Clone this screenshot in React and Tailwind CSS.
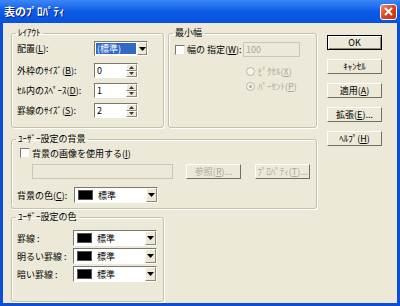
const FONT = "font-['Noto_Sans_CJK_JP','Noto_Sans_CJK_SC',sans-serif]";

function Arrow({ color = "black" }) {
  return (
    <svg width="7" height="4" viewBox="0 0 7 4">
      <path d="M0 0h7L3.5 4z" fill={color} />
    </svg>
  );
}

function SmallArrow({ up }) {
  return (
    <svg width="5" height="3" viewBox="0 0 5 3">
      <path d={up ? "M0 3h5L2.5 0z" : "M0 0h5L2.5 3z"} fill="#3a3a3a" />
    </svg>
  );
}

function Group({ title, className, children }) {
  return (
    <fieldset
      className={`rounded-[3px] border border-[#C4C1AF] shadow-[1px_1px_0_white,inset_1px_1px_0_white] ${className}`}
    >
      <legend className="ml-[4px] h-[12px] px-[2px] text-[9px] leading-[12px] text-black">
        {title}
      </legend>
      {children}
    </fieldset>
  );
}

function Button({ children, def, disabled }) {
  return (
    <div
      className={`flex h-[15px] w-[55px] items-center justify-center text-[9px] leading-none ${
        def
          ? "border border-black shadow-[inset_1px_1px_0_white,inset_-1px_-1px_0_#8A887C]"
          : "border border-t-white border-l-white border-r-[#716F64] border-b-[#716F64]"
      } ${disabled ? "text-[#ACA899]" : "text-black"}`}
    >
      {children}
    </div>
  );
}

function Spin({ value }) {
  return (
    <div className="flex h-[15px] w-[44px] border border-t-[#7A786B] border-l-[#7A786B] border-r-white border-b-white bg-white">
      <span className="flex-1 pl-[2px] text-[9px] leading-[13px]">{value}</span>
      <div className="flex w-[11px] flex-col">
        <div className="flex flex-1 items-center justify-center border border-t-white border-l-white border-r-[#8A887C] border-b-[#8A887C] bg-[#ECE9D8]">
          <SmallArrow up />
        </div>
        <div className="flex flex-1 items-center justify-center border border-t-white border-l-white border-r-[#8A887C] border-b-[#8A887C] bg-[#ECE9D8]">
          <SmallArrow />
        </div>
      </div>
    </div>
  );
}

function ColorCombo() {
  return (
    <div className="flex h-[16px] w-[84px] items-center border border-t-[#7A786B] border-l-[#7A786B] border-r-white border-b-white bg-white">
      <div className="ml-[3px] h-[10px] w-[15px] border border-[#555] bg-black" />
      <span className="ml-[5px] flex-1 text-[9px] leading-none">標準</span>
      <div className="flex h-[14px] w-[11px] items-center justify-center border border-t-white border-l-white border-r-[#8A887C] border-b-[#8A887C] bg-[#ECE9D8]">
        <Arrow />
      </div>
    </div>
  );
}

function Check({ children }) {
  return (
    <div className="flex items-center">
      <div className="h-[10px] w-[10px] border border-t-[#7A786B] border-l-[#7A786B] border-r-[#E8E6DA] border-b-[#E8E6DA] bg-white" />
      <span className="ml-[2px] text-[9px] leading-none">{children}</span>
    </div>
  );
}

function Radio({ children, checked }) {
  return (
    <div className="flex items-center text-[#ACA899]">
      <div className="flex h-[9px] w-[9px] items-center justify-center rounded-full border border-[#B8B6A8] bg-[#F4F3EC]">
        {checked && <div className="h-[3px] w-[3px] rounded-full bg-[#ACA899]" />}
      </div>
      <span className="ml-[3px] text-[9px] leading-none">{children}</span>
    </div>
  );
}

export default function App() {
  return (
    <div className={`flex h-[306px] w-[400px] flex-col bg-[#0A4FD6] ${FONT}`}>
      <div className="flex h-[23px] items-center bg-linear-to-b from-[#3C86F7] via-[#0B5BE6] to-[#0952DC] pl-[4px] pr-[3px]">
        <span className="flex-1 text-[11px] font-bold text-white [text-shadow:1px_1px_0_#0A1E6A]">
          表のﾌﾟﾛﾊﾟﾃｨ
        </span>
        <div className="flex h-[16px] w-[17px] items-center justify-center rounded-[3px] border border-white bg-linear-to-br from-[#E88A6A] via-[#D9441C] to-[#C2370F]">
          <svg width="9" height="9" viewBox="0 0 9 9">
            <path d="M1 1l7 7M8 1l-7 7" stroke="white" strokeWidth="2" />
          </svg>
        </div>
      </div>

      <div className="mx-[3px] mb-[3px] flex flex-1 bg-[#ECE9D8] pl-[8px] pt-[4px] text-black">
        <div className="flex w-[306px] flex-col">
          <div className="flex gap-[4px]">
            <Group title="ﾚｲｱｳﾄ" className="h-[101px] w-[153px]">
              <div className="flex flex-col gap-[5px] pl-[5px] pt-[2px]">
                <div className="flex h-[15px] items-center">
                  <span className="w-[77px] text-[9px] leading-none">
                    配置(<u>L</u>):
                  </span>
                  <div className="flex h-[15px] w-[54px] items-center border border-t-[#7A786B] border-l-[#7A786B] border-r-white border-b-white bg-white">
                    <span className="ml-[1px] flex-1 bg-[#316AC5] pl-[1px] text-[9px] leading-[11px] text-white">
                      (標準)
                    </span>
                    <div className="ml-[1px] flex h-[13px] w-[10px] items-center justify-center border border-t-white border-l-white border-r-[#8A887C] border-b-[#8A887C] bg-[#ECE9D8]">
                      <Arrow />
                    </div>
                  </div>
                </div>
                <div className="mt-[2px] flex h-[15px] items-center">
                  <span className="w-[77px] text-[9px] leading-none">
                    外枠のｻｲｽﾞ(<u>B</u>):
                  </span>
                  <Spin value="0" />
                </div>
                <div className="flex h-[15px] items-center">
                  <span className="w-[77px] text-[9px] leading-none">
                    ｾﾙ内のｽﾍﾟｰｽ(<u>D</u>):
                  </span>
                  <Spin value="1" />
                </div>
                <div className="flex h-[15px] items-center">
                  <span className="w-[77px] text-[9px] leading-none">
                    罫線のｻｲｽﾞ(<u>S</u>):
                  </span>
                  <Spin value="2" />
                </div>
              </div>
            </Group>

            <Group title="最小幅" className="h-[101px] w-[149px]">
              <div className="flex flex-col pl-[6px] pt-[3px]">
                <div className="flex h-[15px] items-center">
                  <div className="w-[68px]">
                    <Check>
                      幅の 指定(<u>W</u>):
                    </Check>
                  </div>
                  <div className="flex h-[15px] w-[57px] items-center border border-[#C9C7BA] bg-[#ECE9D8] pl-[2px] text-[9px] text-[#ACA899]">
                    100
                  </div>
                </div>
                <div className="ml-[71px] mt-[10px] flex flex-col gap-[6px]">
                  <Radio>
                    ﾋﾟｸｾﾙ(<u>X</u>)
                  </Radio>
                  <Radio checked>
                    ﾊﾟｰｾﾝﾄ(<u>P</u>)
                  </Radio>
                </div>
              </div>
            </Group>
          </div>

          <Group title="ﾕｰｻﾞｰ設定の背景" className="mt-[5px] h-[76px] w-[306px]">
            <div className="flex flex-col pl-[8px] pt-[3px]">
              <Check>
                背景の画像を使用する(<u>I</u>)
              </Check>
              <div className="mt-[6px] flex items-center">
                <div className="ml-[12px] h-[15px] w-[141px] border border-[#C9C7BA] bg-[#ECE9D8]" />
                <div className="ml-[13px]">
                  <Button disabled>
                    参照(<u>R</u>)...
                  </Button>
                </div>
                <div className="ml-[14px]">
                  <Button disabled>
                    ﾌﾟﾛﾊﾟﾃｨ(<u>T</u>)...
                  </Button>
                </div>
              </div>
              <div className="-ml-[3px] mt-[8px] flex items-center">
                <span className="w-[57px] text-[9px] leading-none">
                  背景の色(<u>C</u>):
                </span>
                <ColorCombo />
              </div>
            </div>
          </Group>

          <Group title="ﾕｰｻﾞｰ設定の色" className="mt-[2px] h-[91px] w-[153px]">
            <div className="flex flex-col gap-[2px] pl-[5px] pt-[7px]">
              <div className="flex items-center">
                <span className="w-[56px] text-[9px] leading-none">罫線 :</span>
                <ColorCombo />
              </div>
              <div className="flex items-center">
                <span className="w-[56px] text-[9px] leading-none">明るい罫線 :</span>
                <ColorCombo />
              </div>
              <div className="flex items-center">
                <span className="w-[56px] text-[9px] leading-none">暗い罫線 :</span>
                <ColorCombo />
              </div>
            </div>
          </Group>
        </div>

        <div className="ml-[10px] flex flex-col gap-[9px] pt-[8px]">
          <Button def>OK</Button>
          <Button>ｷｬﾝｾﾙ</Button>
          <Button>
            適用(<u>A</u>)
          </Button>
          <Button>
            拡張(<u>E</u>)...
          </Button>
          <Button>
            ﾍﾙﾌﾟ(<u>H</u>)
          </Button>
        </div>
      </div>
    </div>
  );
}
